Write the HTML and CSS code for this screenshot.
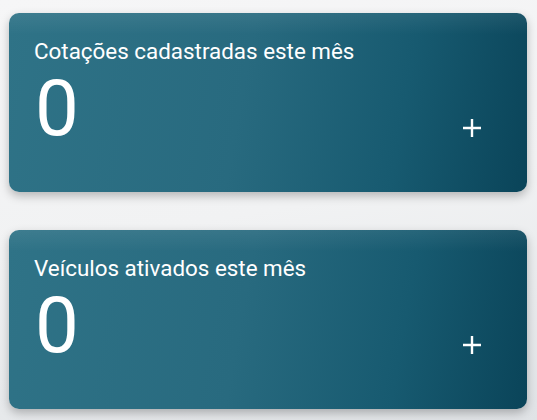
FILE: index.html
```html
<!DOCTYPE html>
<html lang="pt-BR">
<head>
<meta charset="utf-8">
<link rel="stylesheet" href="styles.css">
</head>
<body>
<main class="page">
  <section class="card">
    <h2 class="card-title">Cotações cadastradas este mês</h2>
    <div class="card-body">
      <span class="card-value">0</span>
      <svg class="card-plus" width="18" height="18" viewBox="0 0 18 18" aria-hidden="true"><path d="M9 0V18M0 9H18" stroke="#fff" stroke-width="2.4" fill="none"/></svg>
    </div>
  </section>
  <section class="card">
    <h2 class="card-title">Veículos ativados este mês</h2>
    <div class="card-body">
      <span class="card-value">0</span>
      <svg class="card-plus" width="18" height="18" viewBox="0 0 18 18" aria-hidden="true"><path d="M9 0V18M0 9H18" stroke="#fff" stroke-width="2.4" fill="none"/></svg>
    </div>
  </section>
</main>
</body>
</html>
```
FILE: styles.css
```css
html, body {
  margin: 0;
  padding: 0;
  height: 100%;
}
body {
  font-family: Roboto, "Liberation Sans", sans-serif;
  background: linear-gradient(170deg, #f6f6f7 0%, #f1f2f3 50%, #e0e3e6 100%);
  overflow: hidden;
}
.page {
  display: flex;
  flex-direction: column;
  gap: 38px;
  padding: 13px 10px 0 9px;
}
.card {
  height: 179px;
  border-radius: 10px;
  background:
    linear-gradient(180deg, rgba(255,255,255,0.07) 0%, rgba(255,255,255,0) 12%),
    linear-gradient(100deg, #2f7387 0%, #286a7f 45%, #175a70 75%, #0a4459 100%);
  box-shadow: 0 4px 10px rgba(0,0,0,0.25);
  color: #fff;
  padding: 25px 46px 0 25px;
  box-sizing: border-box;
}
.card-title {
  margin: 0;
  font-size: 22.4px;
  font-weight: 400;
  line-height: 26px;
}
.card-body {
  display: flex;
  justify-content: space-between;
  align-items: flex-end;
  margin-top: 6px;
}
.card-value {
  font-size: 78px;
  font-weight: 400;
  line-height: 78px;
  margin-left: 1px;
}
.card-plus {
  display: block;
  margin-bottom: 11px;
}
```
